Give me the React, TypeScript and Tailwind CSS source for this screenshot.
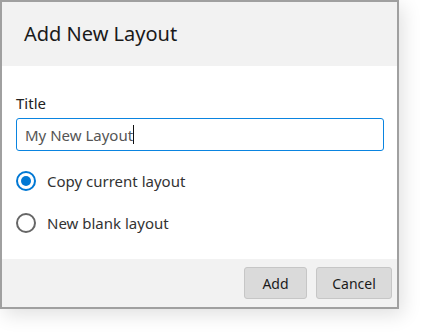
import React from 'react';

const font = { fontFamily: '"Noto Sans", "Open Sans", sans-serif' };

const Radio: React.FC<{ checked?: boolean; label: string; className?: string }> = ({ checked = false, label, className = '' }) => (
  <div className={`flex items-center h-5 ${className}`}>
    {checked ? (
      <span className="w-5 h-5 rounded-full border-2 border-[#0078d4] flex items-center justify-center">
        <span className="w-[10px] h-[10px] rounded-full bg-[#0078d4]" />
      </span>
    ) : (
      <span className="w-5 h-5 rounded-full border-2 border-[#666666]" />
    )}
    <span className="ml-[11px] text-[15px] text-[#333333] leading-5">{label}</span>
  </div>
);

export default function App() {
  return (
    <div className="w-[424px] h-[334px] bg-white" style={font}>
      <div className="w-[399px] border-2 border-[#a0a0a0] bg-white shadow-[4px_6px_18px_rgba(0,0,0,0.12)] flex flex-col">
        {/* Header */}
        <div className="h-16 bg-[#f2f2f2] flex items-center px-[22px]">
          <h2 className="text-[20px] text-[#1a1a1a] leading-none">Add New Layout</h2>
        </div>

        {/* Body */}
        <div className="h-[193px] px-[14px] pt-[27px] flex flex-col">
          <label className="text-[15px] text-[#222222] leading-5">Title</label>
          <div className="mt-[5px] h-[33px] w-[368px] rounded-[3px] border border-[#0a84e0] flex items-center px-2">
            <span className="text-[15px] text-[#555555] leading-5">My New Layout</span>
            <span className="w-px h-[19px] bg-[#111111]" />
          </div>
          <Radio checked label="Copy current layout" className="mt-5" />
          <Radio label="New blank layout" className="mt-[22px]" />
        </div>

        {/* Footer */}
        <div className="h-12 bg-[#f2f2f2] flex items-center justify-end gap-[9px] pr-[5px]">
          <button className="w-[63px] h-8 rounded-[3px] bg-[#dadada] border border-[#c6c6c6] text-[14px] text-[#1a1a1a]">
            Add
          </button>
          <button className="w-[76px] h-8 rounded-[3px] bg-[#dadada] border border-[#c6c6c6] text-[14px] text-[#1a1a1a]">
            Cancel
          </button>
        </div>
      </div>
    </div>
  );
}
